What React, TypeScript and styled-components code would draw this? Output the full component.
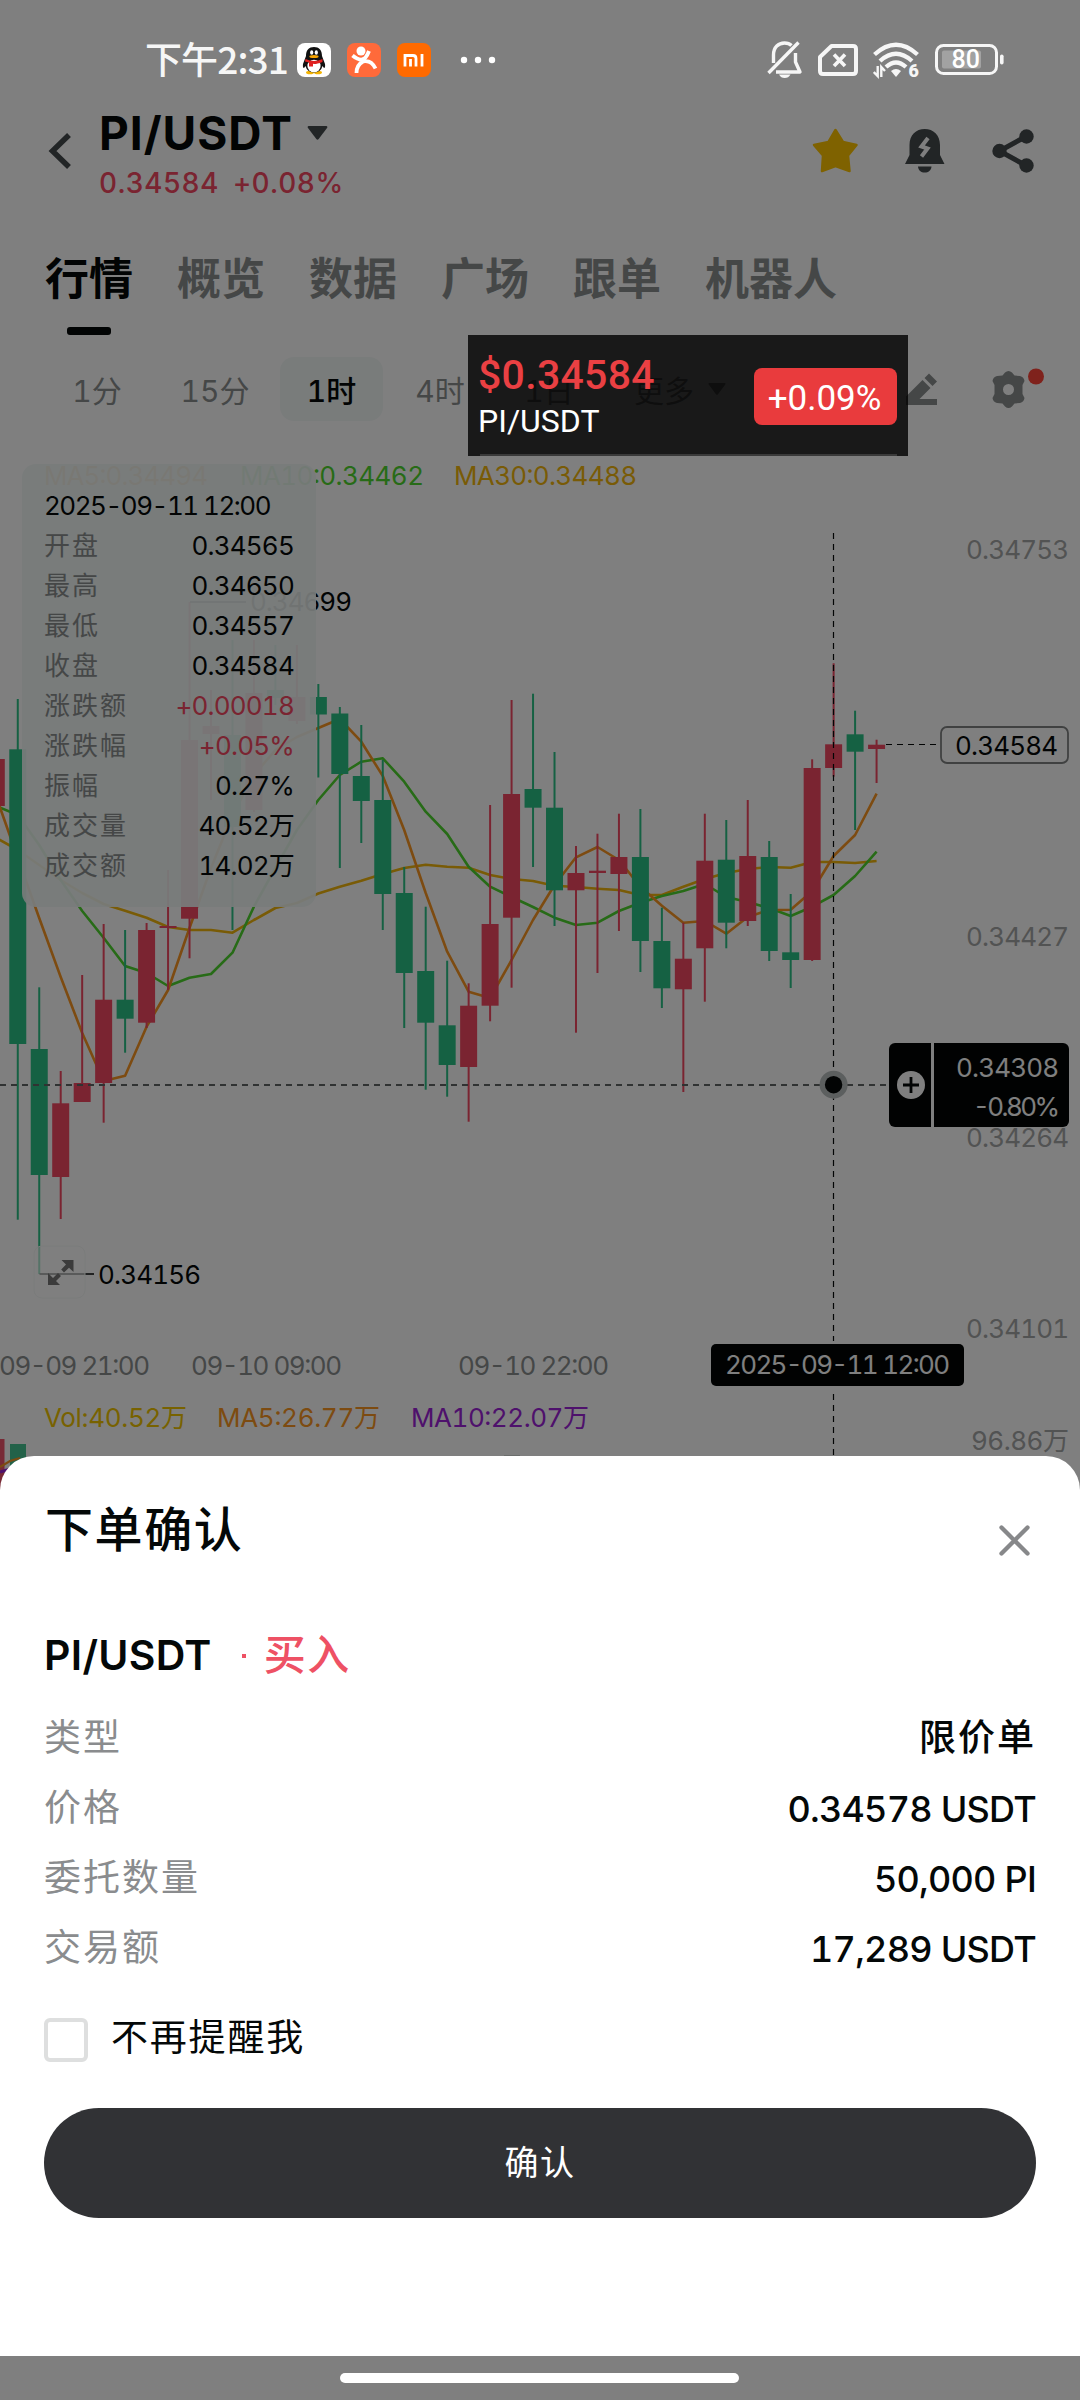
import React from "react";
import styled, { createGlobalStyle } from "styled-components";

const SANS = `Inter, "Noto Sans CJK SC", sans-serif`;
const SYSTEM = `Roboto, "Noto Sans CJK SC", sans-serif`;

const color = {
  ink: "#040808",
  icon: "#444a4d",
  muted: "#8b8f8f",
  axis: "#a4a6a6",
  up: "#f54962",
  down: "#2bc286",
  ma5: "#fb9722",
  ma10: "#4fd62e",
  ma30: "#f2b60c",
  vol: "#f0c400",
  volMa: "#9c22d8",
};

const GlobalStyle = createGlobalStyle`
  * { box-sizing: border-box; }
  body { margin: 0; background: #808080; font-family: ${SANS}; }
  svg { display: block; flex: none; }
`;

const Screen = styled.div`
  position: relative;
  width: 1080px;
  height: 2400px;
  overflow: hidden;
  background: #fff;
  color: ${color.ink};
  font-variant-numeric: tabular-nums;
`;

const Page = styled.main`
  display: flex;
  flex-direction: column;
  padding-top: 104px;
`;

/* ---------- header ---------- */

const Header = styled.header`
  display: flex;
  align-items: center;
  height: 100px;
  padding: 0 46px 7px 48px;
`;

const Heading = styled.div`
  display: flex;
  flex-direction: column;
  align-self: flex-start;
  flex: 1;
  margin-left: 27px;
`;

const TitleRow = styled.div`
  display: flex;
  align-items: center;
  gap: 14px;
  height: 57px;
`;

const Title = styled.h1`
  margin: 0;
  font-size: 46px;
  line-height: 56px;
  font-weight: 700;
  letter-spacing: 1px;
`;

const Quote = styled.div`
  display: flex;
  gap: 14px;
  height: 44px;
  font-size: 28px;
  line-height: 44px;
  font-weight: 500;
  letter-spacing: 0.5px;
  color: ${color.up};
`;

const HeaderActions = styled.div`
  display: flex;
  align-items: center;
  gap: 47px;
`;

const Tabs = styled.nav`
  display: flex;
  gap: 44px;
  height: 131px;
  padding: 47px 45px 0;
`;

const Tab = styled.div<{ $active?: boolean }>`
  display: flex;
  flex-direction: column;
  align-items: center;
  gap: 20px;
  font-size: 44px;
  line-height: 56px;
  font-weight: 700;
  color: ${(p) => (p.$active ? color.ink : color.muted)};
  &::after {
    content: "";
    display: ${(p) => (p.$active ? "block" : "none")};
    width: 44px;
    height: 8px;
    border-radius: 3px;
    background: ${color.ink};
  }
`;

const Intervals = styled.div`
  display: grid;
  grid-template-columns: 106px 130px 103px 114px 104px 158px 1fr auto;
  align-items: center;
  height: 108px;
  padding: 0 36px 0 44px;
`;

const Interval = styled.div<{ $active?: boolean }>`
  display: flex;
  align-items: center;
  justify-content: center;
  gap: 14px;
  height: 64px;
  border-radius: 14px;
  font-size: 30px;
  color: ${(p) => (p.$active ? color.ink : color.muted)};
  font-weight: ${(p) => (p.$active ? 500 : 400)};
  background: ${(p) => (p.$active ? "#f3f8f7" : "transparent")};
`;

const Tools = styled.div`
  display: flex;
  align-items: center;
  gap: 54px;
`;

/* ---------- chart ---------- */

const ChartArea = styled.section`
  position: relative;
  height: 1100px;
  margin-top: 1px;
`;

const Info = styled.div`
  position: absolute;
  left: 22px;
  top: 20px;
  width: 294px;
  height: 443px;
  padding: 22px 22px 0 22px;
  border-radius: 14px;
  background: rgba(241, 247, 246, 0.93);
`;

const InfoRow = styled.div<{ $tone?: "up" }>`
  display: flex;
  justify-content: space-between;
  height: 40px;
  line-height: 40px;
  font-size: 26px;
  color: ${(p) => (p.$tone === "up" ? color.up : color.ink)};
`;

const InfoLabel = styled.span`
  color: ${color.muted};
  letter-spacing: 2px;
`;

const InfoValue = styled.span`
  letter-spacing: -0.8px;
`;

const InfoDate = styled.span`
  letter-spacing: -1.5px;
`;

/* ---------- layers above the page ---------- */

const Scrim = styled.div`
  position: absolute;
  inset: 0;
  background: rgba(0, 0, 0, 0.5);
`;

const StatusBar = styled.div`
  position: absolute;
  inset: 0 0 auto 0;
  display: flex;
  align-items: center;
  height: 120px;
  padding: 0 76px 0 145px;
  color: #f6f6f6;
`;

const Clock = styled.span`
  width: 152px;
  padding-bottom: 4px;
  font-family: "Noto Sans CJK SC", sans-serif;
  font-size: 37px;
  line-height: 48px;
  font-weight: 500;
  letter-spacing: -0.9px;
  white-space: nowrap;
`;

const AppIcons = styled.div`
  display: flex;
  align-items: center;
  gap: 16px;
  flex: 1;
`;

const Dots = styled.div`
  margin-left: 13px;
`;

const StatusIcons = styled.div`
  display: flex;
  align-items: center;
  gap: 15px;
`;

const Ticker = styled.aside`
  position: absolute;
  left: 468px;
  top: 335px;
  display: flex;
  align-items: center;
  justify-content: space-between;
  width: 440px;
  height: 121px;
  padding: 3px 11px 2px 10px;
  background: rgba(0, 0, 0, 0.8);
  font-family: ${SYSTEM};
  &::after {
    content: "";
    position: absolute;
    left: 12px;
    right: 11px;
    bottom: 0;
    height: 2px;
    background: #3a3a3a;
  }
`;

const TickerPrice = styled.div`
  padding-top: 2px;
  font-size: 41px;
  line-height: 48px;
  font-weight: 500;
  letter-spacing: 0.3px;
  color: #ea4043;
`;

const TickerPair = styled.div`
  font-size: 32px;
  line-height: 44px;
  color: #fff;
`;

const TickerChange = styled.div`
  display: flex;
  align-items: center;
  justify-content: center;
  width: 143px;
  height: 57px;
  padding: 4px 2px 0 0;
  border-radius: 8px;
  background: #e93b3d;
  color: #fff;
  font-size: 35px;
`;

const Sheet = styled.section`
  position: absolute;
  left: 0;
  right: 0;
  top: 1456px;
  display: flex;
  flex-direction: column;
  height: 900px;
  padding: 40px 44px 0;
  border-radius: 34px 34px 0 0;
  background: #fff;
`;

const SheetHeader = styled.div`
  display: flex;
  justify-content: space-between;
  height: 126px;
`;

const SheetTitle = styled.h2`
  margin: 0 0 0 1px;
  font-size: 48px;
  line-height: 68px;
  font-weight: 500;
  letter-spacing: 1.6px;
`;

const CloseButton = styled.div`
  padding: 29px 6px 0 0;
`;

const PairRow = styled.div`
  display: flex;
  align-items: center;
  height: 66px;
  font-size: 41px;
  line-height: 66px;
  font-weight: 600;
`;

const PairName = styled.span`
  letter-spacing: 0.3px;
`;

const Bullet = styled.span`
  width: 4px;
  height: 4px;
  margin: 2px 18px 0 30px;
  background: #ee5164;
`;

const Side = styled.span`
  color: #ee5164;
  font-weight: 500;
  font-size: 42px;
  letter-spacing: 1.5px;
`;

const Details = styled.dl`
  display: flex;
  flex-direction: column;
  margin: 15px 0 0;
`;

const Detail = styled.div`
  display: flex;
  justify-content: space-between;
  height: 70px;
  line-height: 70px;
`;

const Term = styled.dt`
  font-size: 37px;
  letter-spacing: 2px;
  color: #8a8c8e;
`;

const Value = styled.dd<{ $cjk?: boolean }>`
  margin: 0;
  padding-top: ${(p) => (p.$cjk ? 0 : 1)}px;
  font-size: ${(p) => (p.$cjk ? 37 : 36)}px;
  font-weight: 500;
  letter-spacing: ${(p) => (p.$cjk ? 2 : -0.75)}px;
`;

const Remind = styled.label`
  display: flex;
  align-items: center;
  gap: 23px;
  height: 44px;
  margin-top: 35px;
`;

const RemindText = styled.span`
  padding-bottom: 5px;
  font-size: 37px;
  line-height: 44px;
  letter-spacing: 1.8px;
`;

const Checkbox = styled.span`
  width: 44px;
  height: 44px;
  border: 4px solid #dedfdf;
  border-radius: 6px;
`;

const Confirm = styled.button`
  height: 110px;
  margin-top: 46px;
  padding: 0 0 6px;
  border: 0;
  border-radius: 55px;
  background: #313235;
  color: #fff;
  font-family: ${SANS};
  font-size: 34px;
  letter-spacing: 1.5px;
  font-weight: 400;
`;

const HomeIndicator = styled.div`
  position: absolute;
  left: 340px;
  top: 2373px;
  width: 399px;
  height: 10px;
  border-radius: 5px;
  background: #fff;
`;

/* ---------- chart data ---------- */

// Candle: [rising, body top, body bottom, high, low] in chart pixels.
type Candle = [boolean, number, number, number, number];

const FIRST_X = -3.7;
const STEP = 21.47;
const xAt = (i: number) => FIRST_X + STEP * (i + 1);

const candles: Candle[] = [
  [true, 759, 806, 759, 806],
  [false, 749.3, 1044, 699, 1219.7],
  [false, 1049, 1175, 987.3, 1274],
  [true, 1103.3, 1177, 1071, 1219],
  [true, 1083, 1102, 975, 1102],
  [true, 999.7, 1083, 924, 1122.7],
  [false, 999.7, 1018.7, 930, 1052.7],
  [true, 930, 1022.7, 923, 1028],
  [true, 926, 928, 870, 990],
  [true, 740, 918.7, 602, 958.3],
  [true, 726, 734, 690, 800],
  [false, 735, 827, 640, 930],
  [true, 693, 810, 640, 812],
  [false, 690, 698, 645, 705],
  [true, 697, 721, 645, 724],
  [false, 697, 714.5, 684, 777.5],
  [false, 713.5, 774, 707, 868],
  [false, 776, 801, 725, 843],
  [false, 800, 894, 760, 930],
  [false, 893, 973, 867, 1028],
  [false, 971, 1022.7, 906.7, 1089.7],
  [false, 1025.3, 1065, 960.7, 1096.7],
  [true, 1005.7, 1067, 983.3, 1121.7],
  [true, 924, 1005.7, 805, 1021.3],
  [true, 794, 917.7, 700, 987.7],
  [false, 789, 807.7, 693.7, 867],
  [false, 807.7, 890.3, 752, 926],
  [true, 873, 890.3, 846, 1032.7],
  [true, 870.7, 873, 833.7, 973],
  [true, 857, 874, 813.7, 931],
  [false, 857, 941, 809, 972],
  [false, 941, 988.3, 907.7, 1008],
  [true, 958.7, 989.3, 922.7, 1092],
  [true, 860.7, 948.3, 813.7, 1001.7],
  [false, 859.7, 922.7, 820, 948.3],
  [true, 856, 921, 800, 926],
  [false, 857, 951, 841, 961],
  [false, 952.3, 960, 894, 988],
  [true, 768, 960, 759.3, 961],
  [true, 744.3, 768, 663.3, 776.7],
  [false, 734.3, 751.7, 710.7, 830],
  [true, 744.7, 749, 739.7, 783],
];

const ma5 = [
  797, 858, 918, 977, 1033, 1081, 1075.7, 1026.7, 990, 928, 868, 815, 775, 750, 737, 728, 719, 741.7, 776,
  830, 893, 951.7, 991.7, 998, 960, 920, 885, 857.3, 847, 860, 886.7, 905.7, 922.7, 921, 933.7, 917,
  910, 909.7, 891, 856, 835, 793.7,
];
const ma10 = [
  806, 815, 845, 880, 911, 937.7, 966, 973, 986, 977.7, 974, 952.7, 906.7, 868, 830, 800, 775, 761.7,
  758.3, 781.7, 811.7, 834, 866.7, 886.7, 897, 907, 917.7, 925, 922.7, 911, 902.7, 896, 891, 884, 897,
  902, 908, 916, 906.7, 895, 876, 851.7,
];
const ma30 = [
  838, 850, 865, 880, 893, 904, 910.7, 917.7, 927, 930, 930, 932.7, 920, 908, 903, 893.5, 886.7, 880.7,
  874, 868, 864.7, 866.7, 867.7, 875, 879, 881, 885.7, 887, 888.7, 890, 895, 895, 886.7, 879, 873, 869,
  867, 867.7, 862, 862, 863, 861,
];

const toPoints = (ys: number[]) => ys.map((y, i) => `${xAt(i - 1).toFixed(1)},${y}`).join(" ");

const info: { label: string; value: string; tone?: "up" }[] = [
  { label: "开盘", value: "0.34565" },
  { label: "最高", value: "0.34650" },
  { label: "最低", value: "0.34557" },
  { label: "收盘", value: "0.34584" },
  { label: "涨跌额", value: "+0.00018", tone: "up" },
  { label: "涨跌幅", value: "+0.05%", tone: "up" },
  { label: "振幅", value: "0.27%" },
  { label: "成交量", value: "40.52万" },
  { label: "成交额", value: "14.02万" },
];

/* ---------- chart drawing ---------- */

const Label = styled.text<{ $fill?: string }>`
  font-family: ${SANS};
  font-size: 26px;
  font-variant-numeric: tabular-nums;
  fill: ${(p) => p.$fill ?? color.ink};
`;

const Chart = () => (
  <svg width="1080" height="1100" viewBox="0 444 1080 1100">
    <Label x="44" y="484.500" textLength="164" $fill={color.ma5}>MA5:0.34494</Label>
    <Label x="240" y="484.500" textLength="184" $fill={color.ma10}>MA10:0.34462</Label>
    <Label x="454" y="484.500" textLength="183" $fill={color.ma30}>MA30:0.34488</Label>

    <g fill="none" strokeWidth="2.600" strokeLinejoin="round">
      <polyline points={toPoints(ma30)} stroke={color.ma30} />
      <polyline points={toPoints(ma10)} stroke={color.ma10} />
      <polyline points={toPoints(ma5)} stroke={color.ma5} />
    </g>
    {candles.map(([rising, top, bottom, high, low], i) => {
      const x = xAt(i - 1);
      return (
        <g key={i} fill={rising ? color.up : color.down}>
          <rect x={x - 1} y={high} width="2" height={low - high} />
          <rect x={x - 8.5} y={top} width="17" height={bottom - top} />
        </g>
      );
    })}

    <path d="M190 602H246M39.500 1274H94" stroke={color.ink} strokeWidth="1.600" />
    <Label x="250" y="610.500" textLength="102">0.34699</Label>
    <Label x="98" y="1284" textLength="103">0.34156</Label>

    <rect x="34" y="1246" width="51" height="52" rx="8" fill="#fff" fillOpacity="0.600" stroke="#f4f8f7" />
    <path
      d="M61.500 1260H73.500V1272L69 1267.700L64 1272.500L61.200 1269.500L66 1264.500ZM48 1273V1285H60L56 1281L61 1276L58 1273L53 1278Z"
      fill="#777"
    />

    <path d="M833.500 533V1341M833.500 1394V1470" stroke={color.ink} strokeWidth="1.200" strokeDasharray="6 5" />
    <path d="M0 1085H888" stroke="#606465" strokeWidth="2" strokeDasharray="6 5" />
    <path d="M886 744.500H940" stroke={color.ink} strokeWidth="1.200" strokeDasharray="6 5" />
    <circle cx="833.600" cy="1084.700" r="14" fill="#b9bebe" />
    <circle cx="833.600" cy="1084.700" r="8.700" fill={color.ink} />

    <Label x="966" y="558.500" textLength="103" $fill={color.axis}>0.34753</Label>
    <Label x="966" y="946" textLength="103" $fill={color.axis}>0.34427</Label>
    <Label x="966" y="1147" textLength="103" $fill={color.axis}>0.34264</Label>
    <Label x="966" y="1338" textLength="103" $fill={color.axis}>0.34101</Label>
    <Label x="971" y="1450" textLength="98" $fill={color.axis}>96.86万</Label>

    <rect x="941" y="727" width="127" height="36" rx="6" fill="#fff" stroke="#808383" strokeWidth="1.800" />
    <Label x="955" y="755" textLength="103">0.34584</Label>

    <rect x="889" y="1043" width="180" height="84" rx="6" fill="#020505" />
    <rect x="931" y="1043" width="3" height="84" fill="#fff" />
    <circle cx="911" cy="1085" r="14" fill="#fff" />
    <path d="M903 1085H919M911 1077V1093" stroke={color.ink} strokeWidth="2.800" />
    <Label x="956" y="1076.500" textLength="103" $fill="#fff">0.34308</Label>
    <Label x="973" y="1116" textLength="87" $fill="#fff">-0.80%</Label>

    <Label x="-1" y="1375" textLength="151" $fill={color.muted}>09-09 21:00</Label>
    <Label x="191" y="1375" textLength="151" $fill={color.muted}>09-10 09:00</Label>
    <Label x="458" y="1375" textLength="151" $fill={color.muted}>09-10 22:00</Label>
    <rect x="711" y="1344" width="253" height="42" rx="5" fill="#020505" />
    <Label x="725" y="1374" textLength="225" $fill="#fff">2025-09-11 12:00</Label>

    <Label x="44" y="1427" textLength="143" $fill={color.vol}>Vol:40.52万</Label>
    <Label x="217" y="1427" textLength="163" $fill={color.ma5}>MA5:26.77万</Label>
    <Label x="411" y="1427" textLength="178" $fill={color.volMa}>MA10:22.07万</Label>

    <rect x="0" y="1439" width="4.500" height="60" fill="#f0556c" />
    <rect x="10" y="1444" width="16" height="60" fill="#46c492" />
    <rect x="504" y="1455" width="16" height="20" fill="#d6dad8" />
    <path d="M0 1467L10 1461L20 1458" stroke={color.ma5} strokeWidth="2.200" fill="none" />
    <path d="M0 1472L20 1466" stroke={color.volMa} strokeWidth="3" fill="none" />
  </svg>
);

/* ---------- icons ---------- */

const BackIcon = () => (
  <svg width="24" height="36" viewBox="0 0 24 36">
    <path d="M21 2L4.500 18L21 34" fill="none" stroke={color.icon} strokeWidth="5.500" />
  </svg>
);

const Caret = ({ width = 21, height = 14, fill = color.icon }) => (
  <svg width={width} height={height} viewBox="0 0 21 14">
    <path d="M1.500 0H19.500Q21 .5 20 2L11.700 13Q10.500 14.500 9.300 13L1 2Q0 .5 1.500 0Z" fill={fill} />
  </svg>
);

const StarIcon = () => (
  <svg width="46" height="46" viewBox="0 0 46 46">
    <path
      d="M23.500 2L31 14L44.500 17L36 27.500L37.500 43L23.500 38L10 43L11 27.500L2 17L16.500 14Z"
      fill="#ffc400"
      stroke="#ffc400"
      strokeWidth="2.500"
      strokeLinejoin="round"
    />
  </svg>
);

const AlertIcon = () => (
  <svg width="40" height="46" viewBox="0 0 40 46">
    <path d="M4.500 17C4.500 7 11 1 19.700 1S35 7 35 17V27L39.500 36H0L4.500 27Z" fill={color.icon} />
    <path d="M13 38.500H26.500C26 42.500 23.500 44.500 19.700 44.500S13.500 42.500 13 38.500Z" fill={color.icon} />
    <path d="M23 10L16.500 18.500L22.500 20.500L16.500 28.500" fill="none" stroke="#fff" strokeWidth="4" />
  </svg>
);

const ShareIcon = () => (
  <svg width="42" height="46" viewBox="0 0 42 46">
    <path d="M34 8.500L7.500 23L34 37.500" fill="none" stroke={color.icon} strokeWidth="5" />
    <circle cx="7.500" cy="23" r="7.200" fill={color.icon} />
    <circle cx="34.500" cy="8.500" r="7.200" fill={color.icon} />
    <circle cx="34.500" cy="37.500" r="7.200" fill={color.icon} />
  </svg>
);

const PencilIcon = () => (
  <svg width="32" height="34" viewBox="0 0 32 34">
    <path d="M23 1.500L31 9.500L26.500 14L18.500 6ZM16.500 8L24.500 16L13.500 27H31V33H0V24.500Z" fill={color.muted} />
  </svg>
);

const GearIcon = () => (
  <svg width="52" height="44" viewBox="0 0 52 44">
    <path
      fillRule="evenodd"
      d="M13 5.500Q16.500 2.500 20 5.500L22.500 8.500L28 9Q32 10 32.500 14L30.500 18V27L32.500 31Q32 35 28 36L22.500 36.500L20 39.500Q16.500 42.500 13 39.500L10.500 36.500L5 36Q1 35 .5 31L2.500 27V18L.5 14Q1 10 5 9L10.500 8.500ZM16.500 17A5.500 5.500 0 1 0 16.500 28A5.500 5.500 0 1 0 16.500 17Z"
      fill={color.muted}
    />
    <circle cx="44" cy="9.500" r="8" fill="#ff4438" />
  </svg>
);

const QQIcon = () => (
  <svg width="34" height="34" viewBox="0 0 34 34">
    <rect width="34" height="34" rx="8" fill="#fff" />
    <ellipse cx="13" cy="29.500" rx="4" ry="1.800" fill="#f5b400" />
    <ellipse cx="21" cy="29.500" rx="4" ry="1.800" fill="#f5b400" />
    <path d="M9 13C9 7 12 4 17 4S25 7 25 13L28 21Q28.500 25 27 25L25.500 23Q24 29 17 29.500Q10 29 8.500 23L7 25Q5.500 25 6 21Z" fill="#111" />
    <ellipse cx="17" cy="23" rx="6.600" ry="6.300" fill="#fff" />
    <path d="M8.500 16Q17 20 25.500 16V19Q17 22 16 20.500V23.500H12V19.500L8 18.500Z" fill="#e02020" />
    <ellipse cx="14.700" cy="9.500" rx="1.600" ry="2.200" fill="#fff" />
    <ellipse cx="19.300" cy="9.500" rx="1.600" ry="2.200" fill="#fff" />
    <ellipse cx="17" cy="13.600" rx="4.600" ry="1.500" fill="#f5a300" />
  </svg>
);

const RunnerIcon = () => (
  <svg width="34" height="34" viewBox="0 0 34 34">
    <rect width="34" height="34" rx="8" fill="#ff6a3a" />
    <circle cx="14" cy="8" r="4.500" fill="#fff" />
    <path d="M5.500 12.500Q11 17 15 16.500T22 8M9.500 30Q9.500 22 16 18.500Q24 16.500 28.500 25.500" fill="none" stroke="#fff" strokeWidth="3.800" />
  </svg>
);

const MiIcon = () => (
  <svg width="34" height="34" viewBox="0 0 34 34">
    <rect width="34" height="34" rx="8" fill="#ff6a00" />
    <path d="M8 23.500V12.500H16Q19 12.500 19 15.500V23.500M13.500 16V23.500M25 11V23.500" fill="none" stroke="#fff" strokeWidth="2.800" />
  </svg>
);

const MoreDots = () => (
  <svg width="36" height="10" viewBox="0 0 36 10">
    {[4, 18, 32].map((x) => (
      <circle key={x} cx={x} cy="5" r="3.200" fill="#fff" />
    ))}
  </svg>
);

const BellOffIcon = () => (
  <svg width="36" height="38" viewBox="0 0 36 38">
    <g fill="none" stroke="#f6f6f6" strokeWidth="3.400" strokeLinejoin="round">
      <path d="M6.500 22V14C6.500 6 11.500 2 17.500 2C20.500 2 23 3 24.500 4.500" />
      <path d="M28.500 12V21L33 31H9" />
      <path d="M31.500 1.500L1.500 32" />
    </g>
    <path d="M12 33.500H23.500Q21.500 37 17.700 37T12 33.500Z" fill="#f6f6f6" />
  </svg>
);

const SimIcon = () => (
  <svg width="40" height="32" viewBox="0 0 40 32">
    <path d="M13.500 2H35Q38 2 38 5V27Q38 30 35 30H5Q2 30 2 27V13Z" fill="none" stroke="#f6f6f6" strokeWidth="4" strokeLinejoin="round" />
    <path d="M16 10.500L27 22M27 10.500L16 22" stroke="#f6f6f6" strokeWidth="3.600" />
  </svg>
);

const WifiIcon = () => (
  <svg width="47" height="42" viewBox="0 -3 47 42">
    <g fill="none" stroke="#f6f6f6" strokeWidth="4.300">
      <path d="M1.500 12.500Q23 -7 44.500 12.500" />
      <path d="M7 19Q23 4.500 39 19" />
      <path d="M13 25Q23 16 33 25" />
    </g>
    <path d="M18 29Q23 25 28 29L23 35Z" fill="#f6f6f6" />
    <path d="M4.700 24V34L.8 30M8.300 35V25L12 29" fill="none" stroke="#f6f6f6" strokeWidth="2.400" />
    <text x="35.500" y="35" fill="#f6f6f6" fontFamily="Roboto, sans-serif" fontWeight="900" fontSize="18">6</text>
  </svg>
);

const BatteryIcon = () => (
  <svg width="69" height="32" viewBox="0 0 69 32">
    <rect x="1.500" y="1.500" width="60" height="28" rx="7" fill="none" stroke="#f6f6f6" strokeWidth="3" />
    <rect x="7" y="6.500" width="39" height="18" rx="2" fill="#fff" fillOpacity="0.280" />
    <rect x="65" y="10.500" width="3.600" height="10" rx="1.800" fill="#f6f6f6" />
    <text x="16.500" y="24" fill="#fff" fontFamily="Roboto, sans-serif" fontWeight="500" fontSize="25">80</text>
  </svg>
);

const CloseIcon = () => (
  <svg width="31" height="31" viewBox="0 0 31 31">
    <path d="M2.500 2.500L28.500 28.500M28.500 2.500L2.500 28.500" stroke="#87888a" strokeWidth="4.300" strokeLinecap="round" />
  </svg>
);

/* ---------- screen ---------- */

const tabs = ["行情", "概览", "数据", "广场", "跟单", "机器人"];

const order = [
  { term: "类型", value: "限价单", cjk: true },
  { term: "价格", value: "0.34578 USDT" },
  { term: "委托数量", value: "50,000 PI" },
  { term: "交易额", value: "17,289 USDT" },
];

export default function App() {
  return (
    <Screen>
      <GlobalStyle />
      <Page>
        <Header>
          <BackIcon />
          <Heading>
            <TitleRow>
              <Title>PI/USDT</Title>
              <Caret />
            </TitleRow>
            <Quote>
              <span>0.34584</span>
              <span>+0.08%</span>
            </Quote>
          </Heading>
          <HeaderActions>
            <StarIcon />
            <AlertIcon />
            <ShareIcon />
          </HeaderActions>
        </Header>
        <Tabs>
          {tabs.map((name, i) => (
            <Tab key={name} $active={i === 0}>
              {name}
            </Tab>
          ))}
        </Tabs>
        <Intervals>
          <Interval>1分</Interval>
          <Interval>15分</Interval>
          <Interval $active>1时</Interval>
          <Interval>4时</Interval>
          <Interval>1日</Interval>
          <Interval>
            更多
            <Caret width={18} height={12} fill={color.muted} />
          </Interval>
          <span />
          <Tools>
            <PencilIcon />
            <GearIcon />
          </Tools>
        </Intervals>
        <ChartArea>
          <Chart />
          <Info>
            <InfoRow>
              <InfoDate>2025-09-11 12:00</InfoDate>
            </InfoRow>
            {info.map((row) => (
              <InfoRow key={row.label} $tone={row.tone}>
                <InfoLabel>{row.label}</InfoLabel>
                <InfoValue>{row.value}</InfoValue>
              </InfoRow>
            ))}
          </Info>
        </ChartArea>
      </Page>

      <Scrim />

      <StatusBar>
        <Clock>下午2:31</Clock>
        <AppIcons>
          <QQIcon />
          <RunnerIcon />
          <MiIcon />
          <Dots>
            <MoreDots />
          </Dots>
        </AppIcons>
        <StatusIcons>
          <BellOffIcon />
          <SimIcon />
          <WifiIcon />
          <BatteryIcon />
        </StatusIcons>
      </StatusBar>

      <Ticker>
        <div>
          <TickerPrice>$0.34584</TickerPrice>
          <TickerPair>PI/USDT</TickerPair>
        </div>
        <TickerChange>+0.09%</TickerChange>
      </Ticker>

      <Sheet>
        <SheetHeader>
          <SheetTitle>下单确认</SheetTitle>
          <CloseButton>
            <CloseIcon />
          </CloseButton>
        </SheetHeader>
        <PairRow>
          <PairName>PI/USDT</PairName>
          <Bullet />
          <Side>买入</Side>
        </PairRow>
        <Details>
          {order.map((row) => (
            <Detail key={row.term}>
              <Term>{row.term}</Term>
              <Value $cjk={row.cjk}>{row.value}</Value>
            </Detail>
          ))}
        </Details>
        <Remind>
          <Checkbox />
          <RemindText>不再提醒我</RemindText>
        </Remind>
        <Confirm>确认</Confirm>
      </Sheet>
      <HomeIndicator />
    </Screen>
  );
}
